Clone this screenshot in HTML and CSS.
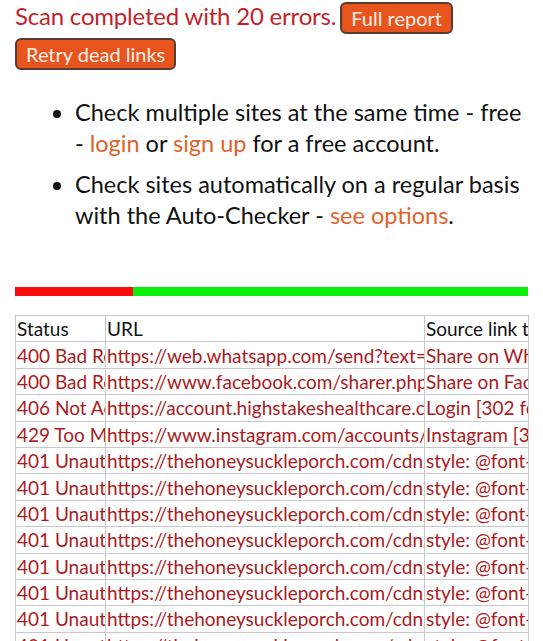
FILE: index.html
```html
<!DOCTYPE html>
<html>
<head>
<meta charset="utf-8">
<link rel="stylesheet" href="styles.css">
</head>
<body>
<div class="page">
  <div class="status-line">
    <span class="scan-msg">Scan completed with 20 errors.</span>
    <button class="btn">Full report</button>
    <button class="btn">Retry dead links</button>
  </div>
  <ul class="tips">
    <li>Check multiple sites at the same time - free - <a class="lnk">login</a> or <a class="lnk">sign up</a> for a free account.</li>
    <li>Check sites automatically on a regular basis with the Auto-Checker - <a class="lnk">see options</a>.</li>
  </ul>
  <div class="progress"><div class="bad" style="width:23%"></div><div class="good"></div></div>
  <table class="results">
    <colgroup><col class="c1"><col class="c2"><col class="c3"></colgroup>
    <thead>
      <tr><th>Status</th><th>URL</th><th>Source link text</th></tr>
    </thead>
    <tbody>
      <tr><td>400 Bad Request</td><td>https://web.whatsapp.com/send?text=</td><td>Share on WhatsApp</td></tr>
      <tr><td>400 Bad Request</td><td>https://www.facebook.com/sharer.php</td><td>Share on Facebook</td></tr>
      <tr><td>406 Not Acceptable</td><td>https://account.highstakeshealthcare.com</td><td>Login [302 found]</td></tr>
      <tr><td>429 Too Many Requests</td><td>https://www.instagram.com/accounts/</td><td>Instagram [301]</td></tr>
      <tr><td>401 Unauthorized</td><td>https://thehoneysuckleporch.com/cdn/fonts</td><td>style: @font-face</td></tr>
      <tr><td>401 Unauthorized</td><td>https://thehoneysuckleporch.com/cdn/fonts</td><td>style: @font-face</td></tr>
      <tr><td>401 Unauthorized</td><td>https://thehoneysuckleporch.com/cdn/fonts</td><td>style: @font-face</td></tr>
      <tr><td>401 Unauthorized</td><td>https://thehoneysuckleporch.com/cdn/fonts</td><td>style: @font-face</td></tr>
      <tr><td>401 Unauthorized</td><td>https://thehoneysuckleporch.com/cdn/fonts</td><td>style: @font-face</td></tr>
      <tr><td>401 Unauthorized</td><td>https://thehoneysuckleporch.com/cdn/fonts</td><td>style: @font-face</td></tr>
      <tr><td>401 Unauthorized</td><td>https://thehoneysuckleporch.com/cdn/fonts</td><td>style: @font-face</td></tr>
      <tr><td>401 Unauthorized</td><td>https://thehoneysuckleporch.com/cdn/fonts</td><td>style: @font-face</td></tr>
    </tbody>
  </table>
</div>
</body>
</html>
```

FILE: styles.css
```css
html, body {
  margin: 0;
  padding: 0;
  background: #ffffff;
}
body {
  font-family: Lato, "Open Sans", sans-serif;
  color: #111;
  overflow: hidden;
}
.page {
  padding: 2px 15px 0 15px;
}
.status-line {
  line-height: 28px;
}
.scan-msg {
  color: #c51f2a;
  font-size: 24px;
  letter-spacing: -0.2px;
}
.btn {
  font-family: inherit;
  font-size: 20px;
  color: #fbeee6;
  background: #e8541e;
  border: 2px solid #5a3b32;
  border-radius: 6px;
  padding: 0 9px;
  height: 32px;
  line-height: 27px;
  margin: 0 0 4px 0;
  vertical-align: top;
}
.tips {
  margin: 23px 0 0 0;
  padding-left: 60px;
  font-size: 23.5px;
  line-height: 31px;
  color: #111;
}
.tips li {
  margin-bottom: 10px;
}
.tips li:last-child {
  margin-bottom: 0;
}
.lnk {
  color: #e0622c;
}
.progress {
  display: flex;
  height: 9px;
  margin-top: 56px;
  width: 513px;
}
.progress .bad {
  background: #ff0a0a;
}
.progress .good {
  flex: 1;
  background: #0aee0a;
}
.results {
  margin-top: 19px;
  border-collapse: collapse;
  table-layout: fixed;
  width: 513px;
  font-size: 19px;
}
.c1 { width: 90px; }
.c2 { width: 319px; }
.c3 { width: 104px; }
.results th, .results td {
  border: 1px solid #c8c8c8;
  padding: 0 1px;
  height: 25.4px;
  line-height: 25px;
  white-space: nowrap;
  overflow: hidden;
  text-align: left;
  font-weight: normal;
}
.results th {
  color: #111;
}
.results td {
  color: #ac1a22;
}
```
